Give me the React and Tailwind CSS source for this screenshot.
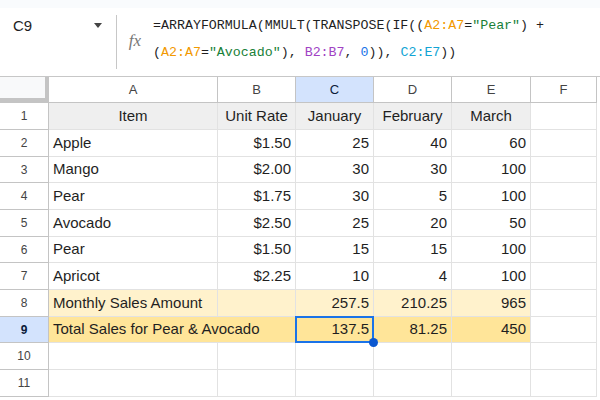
const cols = [
  { key: 'A', w: 'w-[169px]' },
  { key: 'B', w: 'w-[78px]' },
  { key: 'C', w: 'w-[78px]' },
  { key: 'D', w: 'w-[78px]' },
  { key: 'E', w: 'w-[79px]' },
  { key: 'F', w: 'w-[66px]' },
];

const rows = [
  { n: 1, h: 'h-[27px]', cells: ['Item', 'Unit Rate', 'January', 'February', 'March', ''], head: true },
  { n: 2, h: 'h-[27px]', cells: ['Apple', '$1.50', '25', '40', '60', ''] },
  { n: 3, h: 'h-[26px]', cells: ['Mango', '$2.00', '30', '30', '100', ''] },
  { n: 4, h: 'h-[27px]', cells: ['Pear', '$1.75', '30', '5', '100', ''] },
  { n: 5, h: 'h-[27px]', cells: ['Avocado', '$2.50', '25', '20', '50', ''] },
  { n: 6, h: 'h-[26px]', cells: ['Pear', '$1.50', '15', '15', '100', ''] },
  { n: 7, h: 'h-[27px]', cells: ['Apricot', '$2.25', '10', '4', '100', ''] },
  { n: 8, h: 'h-[27px]', cells: ['Monthly Sales Amount', '', '257.5', '210.25', '965', ''], bg: 'bg-[#fff2cc]' },
  { n: 9, h: 'h-[26px]', cells: ['Total Sales for Pear & Avocado', '', '137.5', '81.25', '450', ''], bg: 'bg-[#ffe599]', sel: true },
  { n: 10, h: 'h-[27px]', cells: ['', '', '', '', '', ''] },
  { n: 11, h: 'h-[27px]', cells: ['', '', '', '', '', ''] },
];

function Cell({ row, i, text }) {
  const col = cols[i];
  let bg = '';
  if (i < 5) {
    if (row.head) bg = 'bg-[#efefef]';
    else if (row.bg) bg = row.bg;
  }
  const align = row.head ? 'justify-center' : i === 0 ? 'justify-start' : 'justify-end';
  const overflow = row.sel && i === 0;
  const selected = row.sel && i === 2;
  return (
    <div
      className={`relative flex shrink-0 items-center px-[4px] border-b border-[#e2e2e2] ${
        overflow ? 'border-r-0' : 'border-r'
      } ${col.w} ${bg} ${align}`}
    >
      <span className={`whitespace-nowrap ${overflow ? 'relative z-10' : ''}`}>{text}</span>
      {selected && (
        <>
          <div className="absolute -left-px -top-px -right-px -bottom-px border-2 border-[#1a73e8]" />
          <div className="absolute -right-[5px] -bottom-[5px] w-[9px] h-[9px] rounded-full bg-[#0b57d0] z-10" />
        </>
      )}
    </div>
  );
}

function Token({ c, children }) {
  return <span className={c}>{children}</span>;
}

export default function App() {
  const orange = 'text-[#f29900]';
  const green = 'text-[#188038]';
  const purple = 'text-[#a142c4]';
  const blue = 'text-[#1a73e8]';
  const cyan = 'text-[#12a4d4]';

  return (
    <div className="w-[600px] h-[400px] overflow-hidden bg-white text-[#1f1f1f] font-['Liberation_Sans',Arial,sans-serif]">
      <div className="h-[8px] bg-[#f9fbfd]" />
      <div className="flex h-[69px] border-b border-[#c7c7c7]">
        <div className="flex w-[116px] shrink-0 items-start justify-between pl-[13px] pr-[14px] pt-[8px]">
          <span className="text-[15px] leading-[20px]">C9</span>
          <svg width="8" height="5" viewBox="0 0 8 5" className="mt-[7px]">
            <path d="M0 0h8L4 5z" fill="#444" />
          </svg>
        </div>
        <div className="w-px mt-[7px] mb-[7px] bg-[#c7c7c7]" />
        <div className="flex w-[36px] shrink-0 items-center justify-center pb-[3px]">
          <span className="italic text-[#777] text-[17px] font-['Liberation_Serif',serif]">fx</span>
        </div>
        <div className="pt-[4px] text-[13.3px] leading-[27px] font-['Liberation_Mono',monospace] whitespace-pre">
          <div>
            =ARRAYFORMULA(MMULT(TRANSPOSE(IF((<Token c={orange}>A2:A7</Token>=<Token c={green}>"Pear"</Token>) +
          </div>
          <div>
            (<Token c={orange}>A2:A7</Token>=<Token c={green}>"Avocado"</Token>), <Token c={purple}>B2:B7</Token>,{' '}
            <Token c={blue}>0</Token>)), <Token c={cyan}>C2:E7</Token>))
          </div>
        </div>
      </div>

      <div className="flex h-[26px] text-[13px] text-[#444]">
        <div className="relative w-[49px] shrink-0 bg-[#f8f9fa]">
          <div className="absolute left-[45px] top-0 bottom-0 w-[4px] bg-[#c4c4c4]" />
          <div className="absolute left-0 right-0 bottom-0 h-[5px] bg-[#c4c4c4]" />
        </div>
        {cols.map((c) => (
          <div
            key={c.key}
            className={`flex shrink-0 items-center justify-center border-r border-b border-[#c4c4c4] ${c.w} ${
              c.key === 'C' ? 'bg-[#d3e3fd] text-[#0b1b3a]' : 'bg-white'
            }`}
          >
            {c.key}
          </div>
        ))}
      </div>

      {rows.map((row) => (
        <div key={row.n} className={`flex text-[15px] ${row.h}`}>
          <div
            className={`flex w-[49px] shrink-0 items-center justify-center border-r border-b border-[#c4c4c4] text-[12px] ${
              row.sel ? 'bg-[#d3e3fd] font-bold text-[#0b1b3a]' : 'bg-white text-[#444]'
            }`}
          >
            {row.n}
          </div>
          {row.cells.map((t, i) => (
            <Cell key={i} row={row} i={i} text={t} />
          ))}
        </div>
      ))}
    </div>
  );
}
